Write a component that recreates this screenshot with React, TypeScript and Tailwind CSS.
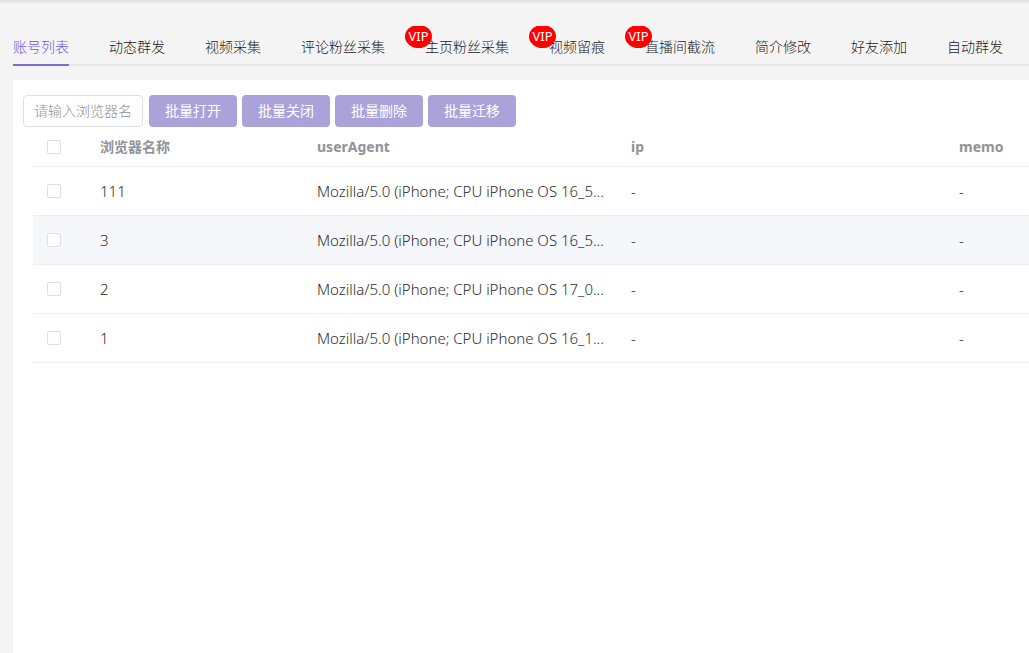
import React, { useState } from 'react';
import clsx from 'clsx';

interface Tab {
    label: string;
    vip?: boolean;
}

interface BrowserRow {
    name: string;
    userAgent: string;
    ip: string;
    memo: string;
}

const TABS: Tab[] = [
    { label: '账号列表' },
    { label: '动态群发' },
    { label: '视频采集' },
    { label: '评论粉丝采集' },
    { label: '主页粉丝采集', vip: true },
    { label: '视频留痕', vip: true },
    { label: '直播间截流', vip: true },
    { label: '简介修改' },
    { label: '好友添加' },
    { label: '自动群发' },
];

const ACTIONS = ['批量打开', '批量关闭', '批量删除', '批量迁移'];

const ROWS: BrowserRow[] = [
    { name: '111', userAgent: 'Mozilla/5.0 (iPhone; CPU iPhone OS 16_5...', ip: '-', memo: '-' },
    { name: '3', userAgent: 'Mozilla/5.0 (iPhone; CPU iPhone OS 16_5...', ip: '-', memo: '-' },
    { name: '2', userAgent: 'Mozilla/5.0 (iPhone; CPU iPhone OS 17_0...', ip: '-', memo: '-' },
    { name: '1', userAgent: 'Mozilla/5.0 (iPhone; CPU iPhone OS 16_1...', ip: '-', memo: '-' },
];

interface CheckboxProps {
    label: string;
    checked: boolean;
    onChange: () => void;
}

const Checkbox: React.FC<CheckboxProps> = ({ label, checked, onChange }) => (
    <input
        type="checkbox"
        aria-label={label}
        checked={checked}
        onChange={onChange}
        className="block size-3.5 appearance-none rounded-xs border border-[#dcdfe6] bg-white checked:border-[#7e6bd9] checked:bg-[#7e6bd9]"
    />
);

/**
 * Horizontal tab bar, clipped at the right on narrow windows
 */
const TabBar: React.FC<{ active: string; onSelect: (label: string) => void }> = ({ active, onSelect }) => (
    <nav className="ml-[13px] overflow-hidden">
        <div role="tablist" className="flex h-10 border-b-2 border-[#e4e7ed]">
            {TABS.map((tab) => (
                <button
                    key={tab.label}
                    role="tab"
                    aria-selected={tab.label === active}
                    onClick={() => onSelect(tab.label)}
                    className="relative h-10 shrink-0 px-5 first:pl-0"
                >
                    <span
                        className={clsx(
                            'block h-10 border-b-2 pt-px text-sm leading-10 font-light whitespace-nowrap',
                            tab.label === active
                                ? 'border-[#7e6bd9] text-[#6f59d6]'
                                : 'border-transparent text-[#1f2023]'
                        )}
                    >
                        {tab.label}
                    </span>
                    {tab.vip && (
                        <span className="absolute -top-px left-0 flex h-[23px] w-[27px] items-center justify-center rounded-[50%] bg-[#ff0000] text-[13px] text-white">
                            VIP
                        </span>
                    )}
                </button>
            ))}
        </div>
    </nav>
);

const BrowserTable: React.FC = () => {
    const [selected, setSelected] = useState<string[]>([]);
    const allSelected = selected.length === ROWS.length;

    const toggle = (name: string) => {
        setSelected(selected.includes(name) ? selected.filter((n) => n !== name) : [...selected, name]);
    };

    return (
        <div className="ml-2.5 overflow-hidden">
            <table className="w-full table-fixed border-separate border-spacing-0 text-left text-sm [&_td]:border-b [&_td]:border-[#ebeef5] [&_th]:border-b [&_th]:border-[#ebeef5]">
                <colgroup>
                    <col className="w-[57px]" />
                    <col className="w-[217px]" />
                    <col className="w-[314px]" />
                    <col className="w-[328px]" />
                    <col />
                </colgroup>
                <thead>
                    <tr className="h-10 text-[#909399]">
                        <th className="px-3.5">
                            <Checkbox
                                label="全选"
                                checked={allSelected}
                                onChange={() => setSelected(allSelected ? [] : ROWS.map((row) => row.name))}
                            />
                        </th>
                        <th className="px-2.5 font-bold">浏览器名称</th>
                        <th className="px-2.5 font-bold">userAgent</th>
                        <th className="px-2.5 font-bold">ip</th>
                        <th className="px-2.5 font-bold">memo</th>
                    </tr>
                </thead>
                <tbody className="text-[15px] font-light text-[#2c2e32]">
                    {ROWS.map((row, index) => (
                        <tr key={row.name} className={clsx('h-[49px]', index === 1 && 'bg-[#f5f7fa]')}>
                            <td className="px-3.5">
                                <Checkbox
                                    label={row.name}
                                    checked={selected.includes(row.name)}
                                    onChange={() => toggle(row.name)}
                                />
                            </td>
                            <td className="px-2.5 pt-0.5">{row.name}</td>
                            <td className="px-2.5 pt-0.5 whitespace-nowrap">{row.userAgent}</td>
                            <td className="px-2.5 pt-0.5">{row.ip}</td>
                            <td className="px-2.5 pt-0.5">{row.memo}</td>
                        </tr>
                    ))}
                </tbody>
            </table>
        </div>
    );
};

export default function App() {
    const [active, setActive] = useState('账号列表');
    const [keyword, setKeyword] = useState('');

    return (
        <div className="flex min-h-screen flex-col bg-[#f4f4f4] font-['Noto_Sans','Noto_Sans_CJK_SC',sans-serif]">
            <div className="h-[26px] shrink-0 bg-linear-to-b from-[#dcdddd] to-[#f4f4f4] to-[4px]" />
            <TabBar active={active} onSelect={setActive} />
            <main className="mt-3.5 ml-[13px] flex-1 bg-white pt-[15px] pl-2.5">
                <div className="flex items-center gap-[5px]">
                    <input
                        type="text"
                        aria-label="请输入浏览器名"
                        placeholder="请输入浏览器名"
                        value={keyword}
                        onChange={(e) => setKeyword(e.target.value)}
                        className="mr-px h-8 w-[120px] rounded-sm border border-[#dcdfe6] bg-white px-2.5 pb-0.5 text-sm font-light text-[#606266] placeholder:text-[#8f9299]"
                    />
                    {ACTIONS.map((action) => (
                        <button
                            key={action}
                            className="h-8 rounded-sm bg-[#aba2da] px-4 text-sm whitespace-nowrap text-white"
                        >
                            {action}
                        </button>
                    ))}
                </div>
                <BrowserTable />
            </main>
        </div>
    );
}
